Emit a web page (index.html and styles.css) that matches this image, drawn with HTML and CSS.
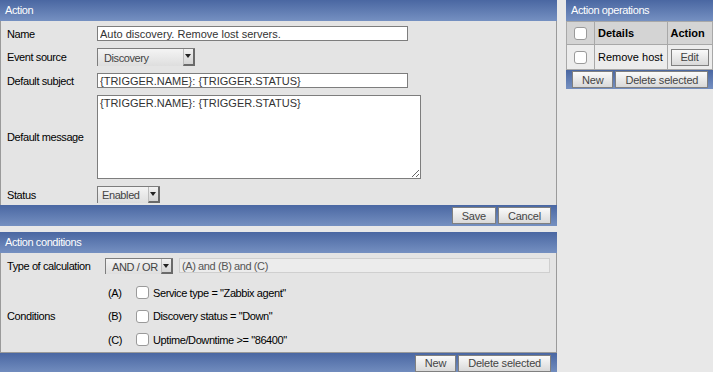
FILE: index.html
```html
<!DOCTYPE html>
<html lang="en">
<head>
    <meta charset="UTF-8">
    <title>Action</title>
    <link rel="stylesheet" href="styles.css">
</head>
<body>
    <div class="page">
        <div class="main">
            <!-- Action -->
            <div class="panel">
                <div class="panel-head">Action</div>
                <div class="form">
                    <label>Name</label>
                    <div><input class="text" type="text" value="Auto discovery. Remove lost servers."></div>
                    <label>Event source</label>
                    <div><span class="select event">Discovery<i class="arrow"></i></span></div>
                    <label>Default subject</label>
                    <div><input class="text" type="text" value="{TRIGGER.NAME}: {TRIGGER.STATUS}"></div>
                    <label>Default message</label>
                    <div><textarea class="message">{TRIGGER.NAME}: {TRIGGER.STATUS}</textarea></div>
                    <label>Status</label>
                    <div><span class="select status">Enabled<i class="arrow"></i></span></div>
                </div>
                <div class="panel-foot">
                    <button class="btn">Save</button>
                    <button class="btn">Cancel</button>
                </div>
            </div>
            <!-- Action conditions -->
            <div class="panel conditions">
                <div class="panel-head">Action conditions</div>
                <div class="form cond-form">
                    <label>Type of calculation</label>
                    <div class="calc">
                        <span class="select andor">AND / OR<i class="arrow"></i></span>
                        <input class="formula" type="text" value="(A) and (B) and (C)" readonly>
                    </div>
                    <label>Conditions</label>
                    <div class="cond-list">
                        <div class="cond"><span class="tag">(A)</span><input type="checkbox" class="check"><span>Service type = "Zabbix agent"</span></div>
                        <div class="cond"><span class="tag">(B)</span><input type="checkbox" class="check"><span>Discovery status = "Down"</span></div>
                        <div class="cond"><span class="tag">(C)</span><input type="checkbox" class="check"><span>Uptime/Downtime &gt;= "86400"</span></div>
                    </div>
                </div>
                <div class="panel-foot">
                    <button class="btn">New</button>
                    <button class="btn">Delete selected</button>
                </div>
            </div>
        </div>
        <!-- Action operations -->
        <div class="side">
            <div class="panel">
                <div class="panel-head">Action operations</div>
                <table class="ops">
                    <tr>
                        <th class="col-check"><input type="checkbox" class="check"></th>
                        <th>Details</th>
                        <th>Action</th>
                    </tr>
                    <tr>
                        <td class="col-check"><input type="checkbox" class="check"></td>
                        <td>Remove host</td>
                        <td><button class="btn edit">Edit</button></td>
                    </tr>
                </table>
                <div class="panel-foot left">
                    <button class="btn">New</button>
                    <button class="btn">Delete selected</button>
                </div>
            </div>
        </div>
    </div>
</body>
</html>
```

FILE: styles.css
```css
* {
    margin: 0;
    padding: 0;
    box-sizing: border-box;
}
body {
    background-color: #e8e8e8;
    font-family: "Liberation Sans", Arial, sans-serif;
    font-size: 11px;
    color: #000;
}
.page {
    display: flex;
    align-items: flex-start;
}
.main {
    width: 557px;
}
.side {
    width: 147px;
    margin-left: 9px;
}
/* panels */
.panel-head {
    height: 21px;
    padding-left: 5px;
    line-height: 20px;
    font-size: 11px;
    letter-spacing: -0.4px;
    color: #fff;
    background: linear-gradient(#4a67a2, #7590c1);
}
.panel-foot {
    display: flex;
    justify-content: flex-end;
    gap: 2px;
    height: 21px;
    padding: 2px 6px 0 0;
    background: linear-gradient(#4a67a2, #7590c1);
}
.panel-foot.left {
    justify-content: flex-start;
    height: 19px;
    padding: 1px 0 0 6px;
    gap: 2px;
}
.conditions {
    margin-top: 6px;
}
/* form */
.form {
    display: grid;
    grid-template-columns: 90px 1fr;
    row-gap: 7px;
    align-items: center;
    padding: 5px 6px 2px;
    background-color: #e4e4e4;
    border-left: 1px solid #9a9a9a;
    border-right: 1px solid #9a9a9a;
}
.form label {
    white-space: nowrap;
    letter-spacing: -0.4px;
}
.form > div {
    display: flex;
}
.text {
    width: 311px;
    height: 15px;
    padding: 0 2px;
    border: 1px solid #7d7d7d;
    background-color: #fff;
    font-family: inherit;
    font-size: 11px;
    color: #333;
    outline: none;
}
.message {
    width: 324px;
    height: 84px;
    padding: 1px 2px;
    border: 1px solid #7d7d7d;
    font-family: inherit;
    font-size: 11px;
    color: #333;
    outline: none;
}
.select {
    display: flex;
    align-items: center;
    justify-content: space-between;
    height: 18px;
    padding: 0 0 0 6px;
    border: 1px solid #7d7d7d;
    border-right: none;
    border-bottom: none;
    background: linear-gradient(#f4f4f4, #dedede);
    color: #444;
    letter-spacing: -0.4px;
    white-space: nowrap;
}
.select .arrow {
    position: relative;
    align-self: stretch;
    width: 12px;
    background: linear-gradient(#f2f2f2, #d4d4d4);
    border-right: 2px solid #6a6a6a;
    border-bottom: 2px solid #6a6a6a;
    border-left: 1px solid #bbb;
}
.select .arrow::after {
    content: "";
    position: absolute;
    left: 1px;
    top: 5px;
    border-left: 3.5px solid transparent;
    border-right: 3.5px solid transparent;
    border-top: 4px solid #222;
}
.event {
    width: 98px;
}
.status {
    width: 63px;
    height: 17px;
    padding-left: 4px;
}
.andor {
    width: 68px;
    height: 16px;
}
/* conditions */
.cond-form {
    grid-template-columns: 98px 1fr;
    row-gap: 7px;
    padding-bottom: 0;
    border-bottom: 1px solid #9a9a9a;
}
.calc {
    gap: 6px;
}
.formula {
    width: 371px;
    height: 15px;
    padding: 0 2px;
    border: 1px solid #cfcfcf;
    background-color: #ececec;
    font-family: inherit;
    font-size: 11px;
    letter-spacing: -0.4px;
    color: #555;
    outline: none;
}
.cond-list {
    flex-direction: column;
}
.cond {
    display: flex;
    align-items: center;
    height: 23.5px;
    padding-left: 3px;
    letter-spacing: -0.4px;
}
.cond .tag {
    width: 28px;
}
.check {
    appearance: none;
    width: 13px;
    height: 13px;
    margin-right: 4px;
    border: 1px solid #9a9a9a;
    border-radius: 3px;
    background-color: #fff;
}
/* buttons */
.btn {
    height: 17px;
    padding: 0 9px;
    border: 1px solid #808080;
    background: linear-gradient(#fafafa, #d9d9d9);
    font-family: inherit;
    font-size: 11px;
    letter-spacing: -0.2px;
    color: #444;
    white-space: nowrap;
}
/* operations table */
.ops {
    width: 100%;
    border-collapse: collapse;
    background-color: #e8e8e8;
    border: 1px solid #9a9a9a;
}
.ops th,
.ops td {
    border: 1px solid #a8a8a8;
    padding: 0 3px;
    text-align: left;
    white-space: nowrap;
}
.ops th {
    height: 23px;
    background-color: #d4d4d4;
    font-weight: bold;
    font-size: 11px;
}
.ops td {
    height: 25px;
    background-color: #ececec;
    font-size: 11px;
}
.ops .col-check {
    width: 28px;
    text-align: center;
}
.ops .col-check .check {
    margin: 3px 0 0;
}
.edit {
    width: 38px;
    padding: 0;
}
```
